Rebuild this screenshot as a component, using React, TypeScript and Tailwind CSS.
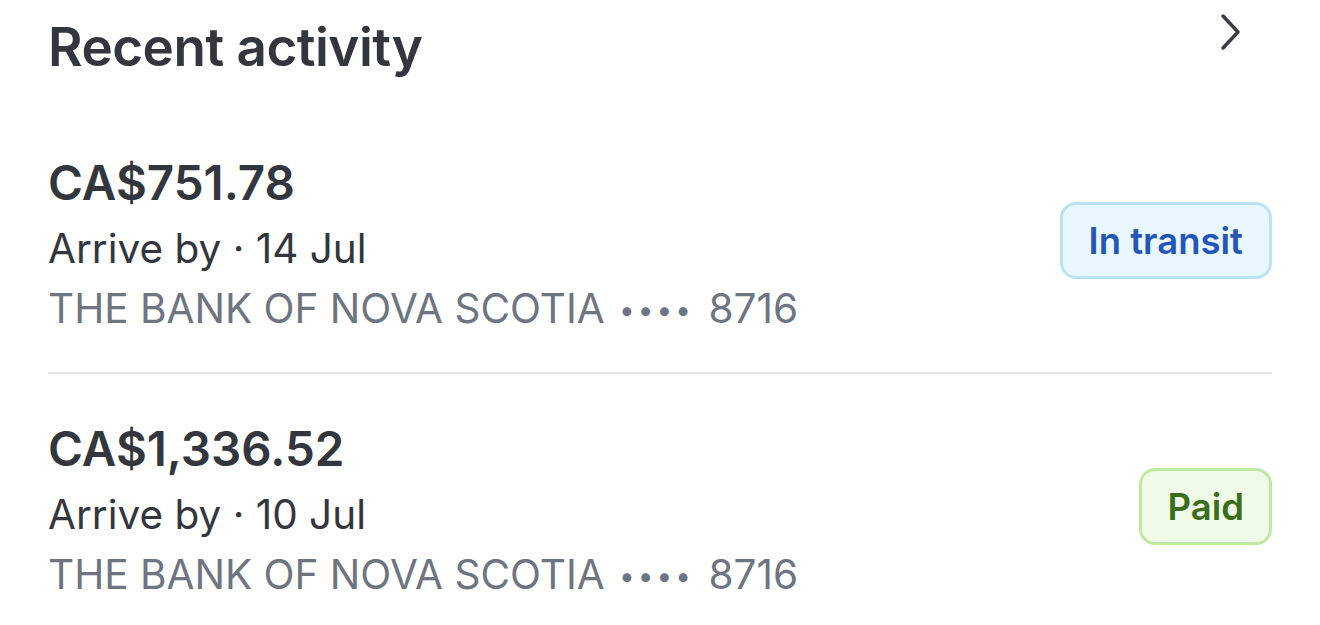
import React from 'react'

interface Activity {
  amount: string
  date: string
  bank: string
  last4: string
  status: 'transit' | 'paid'
}

const items: Activity[] = [
  { amount: 'CA$751.78', date: '14 Jul', bank: 'THE BANK OF NOVA SCOTIA', last4: '8716', status: 'transit' },
  { amount: 'CA$1,336.52', date: '10 Jul', bank: 'THE BANK OF NOVA SCOTIA', last4: '8716', status: 'paid' },
]

function StatusBadge({ status }: { status: Activity['status'] }) {
  if (status === 'transit') {
    return (
      <span className="mt-[51px] rounded-[16px] border-[3px] border-[#b9e3f4] bg-[#e9f8fe] px-[26px] py-[15.5px] text-[36.5px] font-semibold leading-[40px] text-[#2456b8]">
        In transit
      </span>
    )
  }
  return (
    <span className="mt-[51px] rounded-[16px] border-[3px] border-[#bfe9a3] bg-[#effbe7] px-[25px] py-[15.5px] text-[36.5px] font-semibold leading-[40px] text-[#3b6d1d]">
      Paid
    </span>
  )
}

export default function App() {
  return (
    <div className="min-h-screen bg-white px-[48px] font-['Inter',sans-serif] text-[#33363d]">
      <div className="flex items-start justify-between pt-[12px]">
        <h2 className="text-[53px] font-semibold leading-[70px] tracking-[-0.5px]">Recent activity</h2>
        <svg width="26" height="40" viewBox="0 0 26 40" className="mr-[28px]" fill="none">
          <path d="M5 4 L20 20 L5 36" stroke="#3a3d44" strokeWidth="3.5" strokeLinecap="round" strokeLinejoin="round" />
        </svg>
      </div>

      <div className="mt-[69px]">
        {items.map((item, i) => (
          <div
            key={i}
            className={`flex items-start justify-between ${i > 0 ? 'border-t-2 border-[#e6e6e8] pt-[43px]' : ''} pb-[37px]`}
          >
            <div className="flex flex-col">
              <span className="text-[47.5px] font-semibold leading-[64px]">{item.amount}</span>
              <span className="text-[40.5px] leading-[68px]">Arrive by · {item.date}</span>
              <span className="h-[52px] text-[40.5px] leading-[52px] text-[#6e7480]">
                {item.bank}{' '}
                <span className="relative top-[-3px] mx-[3px] text-[28px] leading-none tracking-[3px]">••••</span>{' '}
                {item.last4}
              </span>
            </div>
            <StatusBadge status={item.status} />
          </div>
        ))}
      </div>
    </div>
  )
}
